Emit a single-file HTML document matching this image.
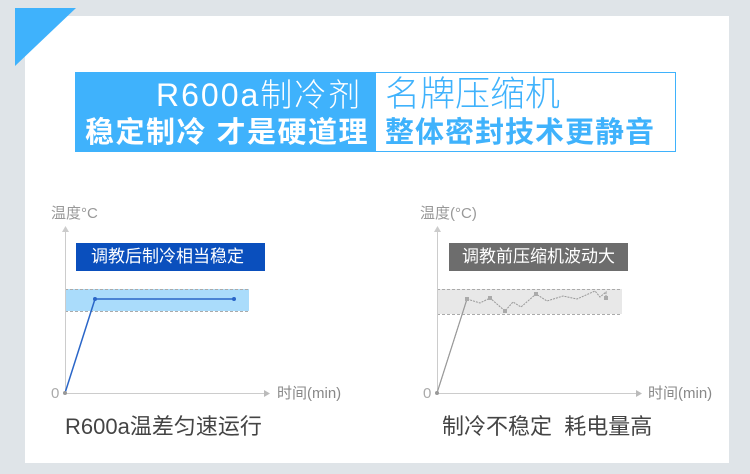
<!DOCTYPE html>
<html><head><meta charset="utf-8"><style>
body{margin:0;width:750px;height:474px;background:#dfe4e8;position:relative;overflow:hidden;font-family:"Liberation Sans","Noto Sans CJK SC",sans-serif}
.abs{position:absolute}
.panel{left:25px;top:16px;width:704px;height:447px;background:#fff}
.t{white-space:nowrap;line-height:1}
</style></head><body>
<div class="abs panel"></div>
<svg class="abs" style="left:0;top:0" width="750" height="474">
<polygon points="15,8 76,8 15,66" fill="#3fb2fc"/>
<rect x="75" y="72" width="300" height="80" fill="#3fb2fc"/>
<rect x="375.5" y="72.5" width="300" height="79" fill="#fff" stroke="#3fb2fc"/>
<rect x="65" y="289" width="184" height="22" fill="#aadcfb"/>
<line x1="65" y1="289.5" x2="249" y2="289.5" stroke="#aaa" stroke-dasharray="3,2"/>
<line x1="65" y1="311.5" x2="249" y2="311.5" stroke="#aaa" stroke-dasharray="3,2"/>
<line x1="65.5" y1="393" x2="65.5" y2="230" stroke="#ccc"/>
<polygon points="62,232 69,232 65.5,226" fill="#ccc"/>
<line x1="65" y1="393.5" x2="264" y2="393.5" stroke="#ccc"/>
<polygon points="264,390 264,397 270,393.5" fill="#bbb"/>
<polyline points="65,393 95,299 234,299" fill="none" stroke="#2a66c8" stroke-width="1.5"/>
<circle cx="95" cy="299" r="2" fill="#2a66c8"/><circle cx="234" cy="299" r="2" fill="#2a66c8"/>
<circle cx="65" cy="393" r="2" fill="#999"/>
<rect x="76" y="243" width="189" height="28" fill="#0a4fbd"/>
<rect x="437" y="289" width="185" height="25" fill="#e8e8e8"/>
<line x1="437" y1="289.5" x2="622" y2="289.5" stroke="#aaa" stroke-dasharray="3,2"/>
<line x1="437" y1="314.5" x2="622" y2="314.5" stroke="#aaa" stroke-dasharray="3,2"/>
<line x1="437.5" y1="393" x2="437.5" y2="230" stroke="#ccc"/>
<polygon points="434,232 441,232 437.5,226" fill="#ccc"/>
<line x1="437" y1="393.5" x2="636" y2="393.5" stroke="#ccc"/>
<polygon points="636,390 636,397 642,393.5" fill="#bbb"/>
<polyline points="437,393 467,299 480,303 490,298 505,311 513,302 521,307 536,294 547,301 563,296 577,299 595,291 600,297 606,292 606,298" fill="none" stroke="#999" stroke-width="1" stroke-dasharray="2,1"/>
<polyline points="437,393 467,299" fill="none" stroke="#999" stroke-width="1.2"/>
<g fill="#aaa"><rect x="465" y="297" width="4" height="4"/><rect x="488" y="296" width="4" height="4"/><rect x="503" y="309" width="4" height="4"/><rect x="534" y="292" width="4" height="4"/><rect x="604" y="296" width="4" height="4"/></g>
<circle cx="437" cy="393" r="2" fill="#999"/>
<rect x="449" y="243" width="179" height="28" fill="#6d6d6d"/>
</svg>
<div class="abs t" style="left:156px;top:79px;font-size:32px;letter-spacing:2px;color:#fff;font-weight:300">R600a制冷剂</div>
<div class="abs t" style="left:85px;top:119px;font-size:29px;color:#fff;font-weight:bold;letter-spacing:1.5px">稳定制冷 才是硬道理</div>
<div class="abs t" style="left:385px;top:77px;font-size:35px;color:#3fb2fc;font-weight:300">名牌压缩机</div>
<div class="abs t" style="left:385px;top:119px;font-size:29px;color:#3fb2fc;font-weight:bold;letter-spacing:1px">整体密封技术更静音</div>
<div class="abs t" style="left:51px;top:206px;font-size:15px;color:#999">温度°C</div>
<div class="abs t" style="left:91px;top:248px;font-size:17px;color:#fff">调教后制冷相当稳定</div>
<div class="abs t" style="left:51px;top:386px;font-size:15px;color:#aaa">0</div>
<div class="abs t" style="left:277px;top:386px;font-size:15px;color:#888">时间(min)</div>
<div class="abs t" style="left:65px;top:416px;font-size:22px;color:#444">R600a温差匀速运行</div>
<div class="abs t" style="left:420px;top:206px;font-size:15px;color:#999">温度(°C)</div>
<div class="abs t" style="left:462px;top:248px;font-size:17px;color:#fff">调教前压缩机波动大</div>
<div class="abs t" style="left:423px;top:386px;font-size:15px;color:#aaa">0</div>
<div class="abs t" style="left:648px;top:386px;font-size:15px;color:#888">时间(min)</div>
<div class="abs t" style="left:442px;top:416px;font-size:22px;color:#444">制冷不稳定&nbsp; 耗电量高</div>
</body></html>
